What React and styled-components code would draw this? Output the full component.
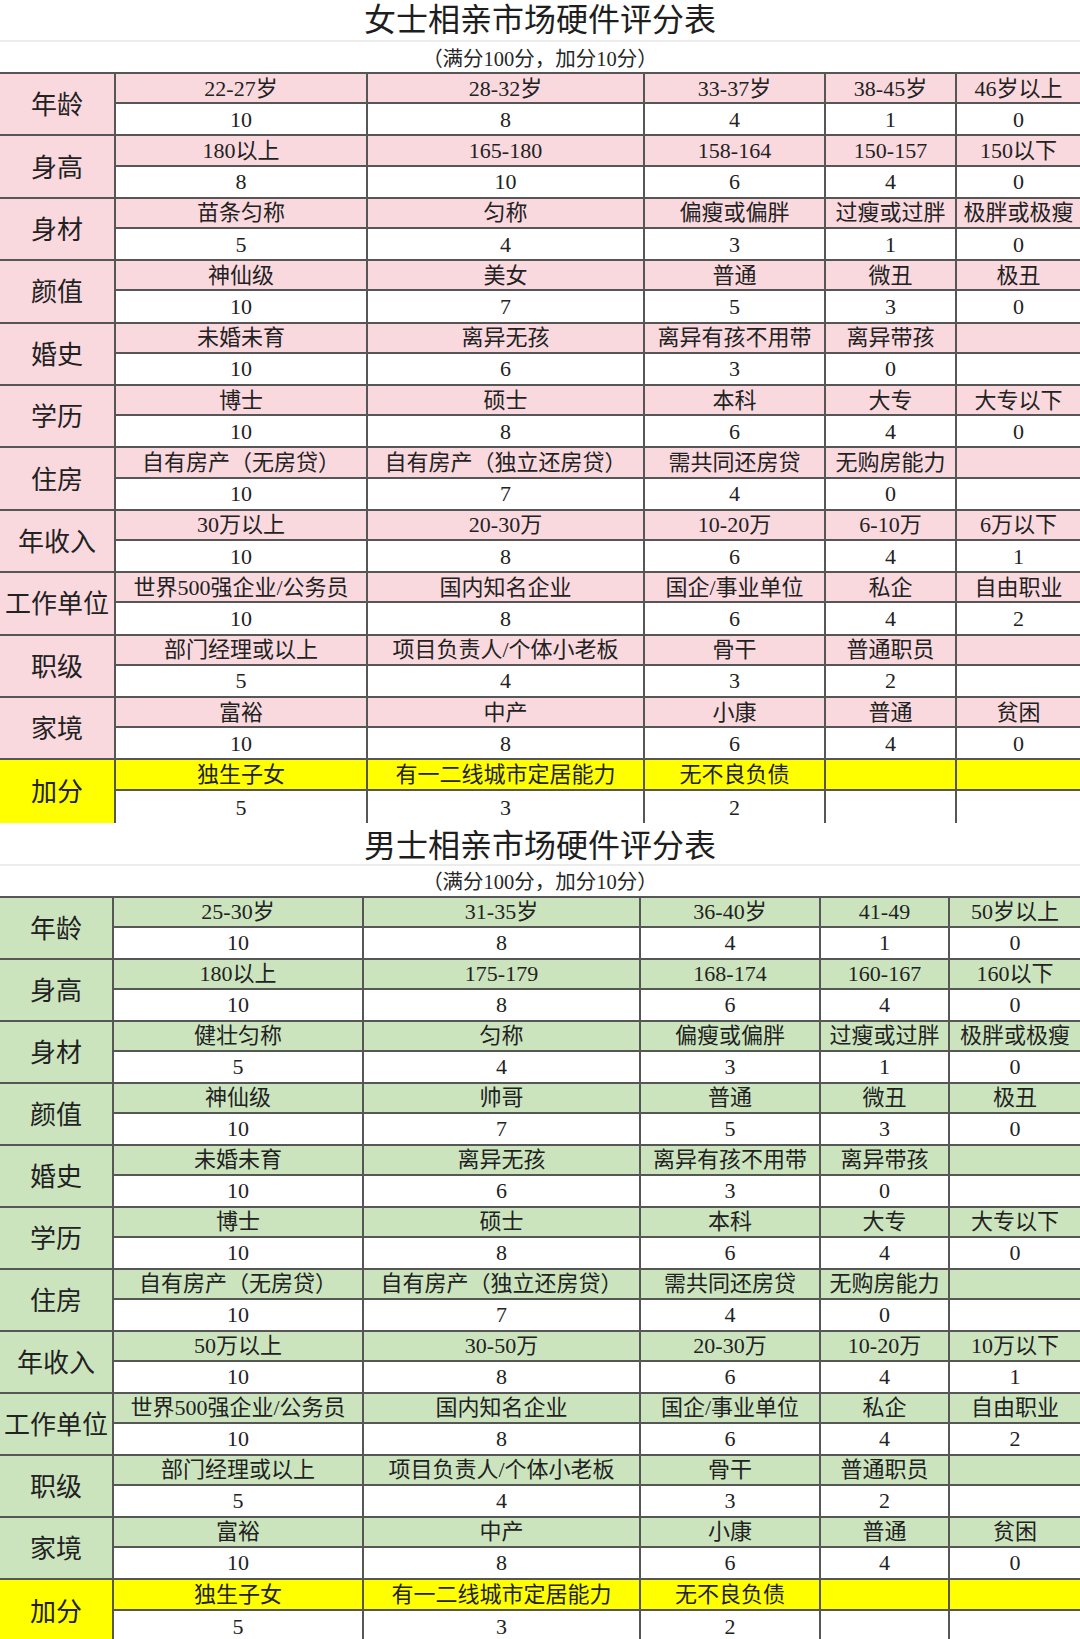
import React from 'react';
import styled, { createGlobalStyle } from 'styled-components';

const GlobalStyle = createGlobalStyle`
  * { box-sizing: border-box; }
  body {
    margin: 0;
    background: #fff;
    font-family: "Liberation Serif", "Noto Sans CJK SC", serif;
    color: #222;
  }
`;

const LINE = '2px solid #565656';

const Sheet = styled.div`
  width: 1080px;
  height: 1639px;
  overflow: hidden;
  background: #fff;
`;

const TitleBar = styled.div`
  height: ${({ $height }) => $height}px;
  padding-top: ${({ $offset }) => $offset}px;
  display: flex;
  align-items: center;
  justify-content: center;
  font-size: 32px;
  line-height: 1;
  color: #1e1e1e;
  border-bottom: 2px solid #ececec;
`;

const Subtitle = styled.div`
  height: 30px;
  padding-top: 4px;
  display: flex;
  align-items: center;
  justify-content: center;
  font-size: 20.5px;
  line-height: 1;
  color: #262626;
`;

const Table = styled.div`
  border-top: ${LINE};
`;

const Category = styled.div`
  display: grid;
  grid-template-columns: ${({ $cols }) => $cols};
  grid-template-rows: 1fr 1fr;
  height: ${({ $pitch }) => $pitch}px;
  border-bottom: ${({ $last }) => ($last ? 'none' : LINE)};
`;

const Cell = styled.div`
  display: flex;
  align-items: center;
  justify-content: center;
  white-space: nowrap;
  line-height: 1;
  font-size: 22px;
  padding-top: 1px;
  border-right: ${({ $edge }) => ($edge ? 'none' : LINE)};
`;

const Label = styled(Cell)`
  grid-row: 1 / span 2;
  font-size: 26px;
  padding-top: 4px;
  background: ${({ $bg }) => $bg};
`;

const Head = styled(Cell)`
  background: ${({ $bg }) => $bg};
  border-bottom: ${LINE};
`;

const Value = styled(Cell)`
  background: #fff;
`;

const PINK = '#f9d8de';
const GREEN = '#cbe4be';
const YELLOW = '#ffff00';

const common = {
  marriage: ['婚史', ['未婚未育', '离异无孩', '离异有孩不用带', '离异带孩', ''], ['10', '6', '3', '0', '']],
  edu: ['学历', ['博士', '硕士', '本科', '大专', '大专以下'], ['10', '8', '6', '4', '0']],
  house: ['住房', ['自有房产（无房贷）', '自有房产（独立还房贷）', '需共同还房贷', '无购房能力', ''], ['10', '7', '4', '0', '']],
  work: ['工作单位', ['世界500强企业/公务员', '国内知名企业', '国企/事业单位', '私企', '自由职业'], ['10', '8', '6', '4', '2']],
  rank: ['职级', ['部门经理或以上', '项目负责人/个体小老板', '骨干', '普通职员', ''], ['5', '4', '3', '2', '']],
  family: ['家境', ['富裕', '中产', '小康', '普通', '贫困'], ['10', '8', '6', '4', '0']],
  bonus: ['加分', ['独生子女', '有一二线城市定居能力', '无不良负债', '', ''], ['5', '3', '2', '', '']],
};

const women = [
  ['年龄', ['22-27岁', '28-32岁', '33-37岁', '38-45岁', '46岁以上'], ['10', '8', '4', '1', '0']],
  ['身高', ['180以上', '165-180', '158-164', '150-157', '150以下'], ['8', '10', '6', '4', '0']],
  ['身材', ['苗条匀称', '匀称', '偏瘦或偏胖', '过瘦或过胖', '极胖或极瘦'], ['5', '4', '3', '1', '0']],
  ['颜值', ['神仙级', '美女', '普通', '微丑', '极丑'], ['10', '7', '5', '3', '0']],
  common.marriage,
  common.edu,
  common.house,
  ['年收入', ['30万以上', '20-30万', '10-20万', '6-10万', '6万以下'], ['10', '8', '6', '4', '1']],
  common.work,
  common.rank,
  common.family,
  common.bonus,
];

const men = [
  ['年龄', ['25-30岁', '31-35岁', '36-40岁', '41-49', '50岁以上'], ['10', '8', '4', '1', '0']],
  ['身高', ['180以上', '175-179', '168-174', '160-167', '160以下'], ['10', '8', '6', '4', '0']],
  ['身材', ['健壮匀称', '匀称', '偏瘦或偏胖', '过瘦或过胖', '极胖或极瘦'], ['5', '4', '3', '1', '0']],
  ['颜值', ['神仙级', '帅哥', '普通', '微丑', '极丑'], ['10', '7', '5', '3', '0']],
  common.marriage,
  common.edu,
  common.house,
  ['年收入', ['50万以上', '30-50万', '20-30万', '10-20万', '10万以下'], ['10', '8', '6', '4', '1']],
  common.work,
  common.rank,
  common.family,
  common.bonus,
];

const ScoreSheet = ({ title, rows, cols, tint, pitch, titleHeight, titleOffset }) => (
  <section>
    <TitleBar $height={titleHeight} $offset={titleOffset}>{title}</TitleBar>
    <Subtitle>（满分100分，加分10分）</Subtitle>
    <Table>
      {rows.map(([name, heads, values], i) => {
        const last = i === rows.length - 1;
        const bg = last ? YELLOW : tint;
        return (
          <Category key={name} $cols={cols} $pitch={pitch} $last={last}>
            <Label $bg={bg}>{name}</Label>
            {heads.map((h, j) => (
              <Head key={j} $bg={bg} $edge={j === 4}>{h}</Head>
            ))}
            {values.map((v, j) => (
              <Value key={j} $edge={j === 4}>{v}</Value>
            ))}
          </Category>
        );
      })}
    </Table>
  </section>
);

export default function App() {
  return (
    <Sheet>
      <GlobalStyle />
      <ScoreSheet
        title="女士相亲市场硬件评分表"
        rows={women}
        cols="116px 252px 277px 181px 131px 1fr"
        tint={PINK}
        pitch={62.4}
        titleHeight={42}
        titleOffset={0}
      />
      <ScoreSheet
        title="男士相亲市场硬件评分表"
        rows={men}
        cols="114px 250px 277px 180px 129px 1fr"
        tint={GREEN}
        pitch={62}
        titleHeight={43}
        titleOffset={5}
      />
    </Sheet>
  );
}
